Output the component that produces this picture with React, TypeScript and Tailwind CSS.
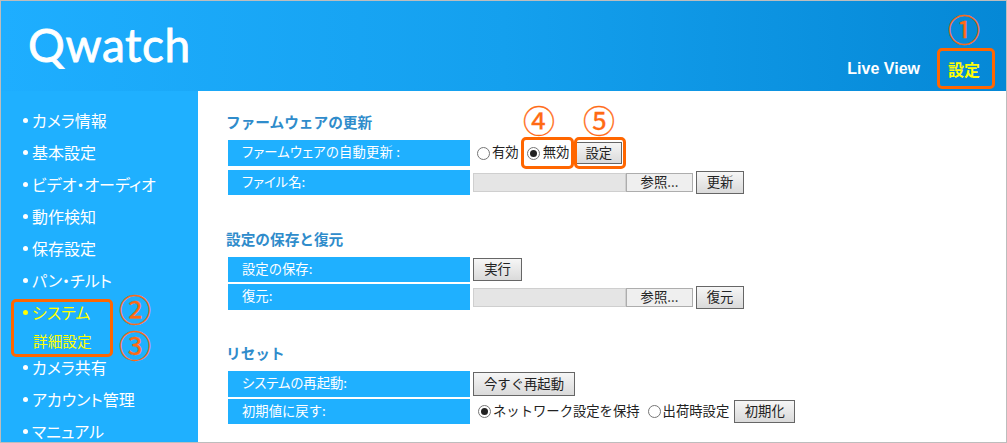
import React from "react";

const jp = "font-['MS_UI_Gothic','Noto_Sans_CJK_JP','Noto_Sans',sans-serif]";

function Radio({ on }: { on?: boolean }) {
  return (
    <span className="inline-flex h-[13px] w-[13px] items-center justify-center rounded-full border border-[#767676] bg-white">
      {on && <span className="h-[7px] w-[7px] rounded-full bg-[#222]" />}
    </span>
  );
}

function Btn({ children, w, h = "h-[23px]" }: { children: React.ReactNode; w: string; h?: string }) {
  return (
    <span className={`inline-flex ${w} ${h} items-center justify-center border border-[#666666] bg-gradient-to-b from-[#f6f6f6] to-[#dadada] pb-[1px] text-[13.33px] text-[#222]`}>
      {children}
    </span>
  );
}

function Row({ label, h, track = "", children }: { label: string; h: string; track?: string; children?: React.ReactNode }) {
  return (
    <div className={`flex ${h} items-center`}>
      <div className={`flex h-full w-[242px] items-center bg-[#1fb0ff] pb-[2px] pl-[14px] text-[13.33px] text-white ${track}`}>{label}</div>
      <div className="ml-[3px] flex items-center text-[13.33px] text-[#222]">{children}</div>
    </div>
  );
}

function FileField({ action }: { action: string }) {
  return (
    <div className="flex items-center">
      <div className="h-[19px] w-[153px] border border-[#cfcfcf] bg-[#e5e5e5]" />
      <span className="flex h-[19px] w-[67px] items-center justify-center border border-[#adadad] bg-[#efefef] pb-[1px] text-[13.33px]">参照...</span>
      <span className="ml-[3px]"><Btn w="w-[48px]">{action}</Btn></span>
    </div>
  );
}

function Nav({ text, active }: { text: string; active?: boolean }) {
  return (
    <li className={`flex h-[32px] items-center pl-[22px] text-[16px] [font-feature-settings:'palt'] ${active ? "text-[#ffff00]" : "text-white"}`}>
      <span className={`mr-[4px] h-[5px] w-[5px] rounded-full ${active ? "bg-[#ffff00]" : "bg-white"}`} />
      {text}
    </li>
  );
}

function Mark({ n, x, y }: { n: string; x: string; y: string }) {
  return (
    <span className={`absolute ${x} ${y} flex h-[30px] w-[34px] items-center justify-center text-[32px] font-normal leading-none text-[#ff6a13] [-webkit-text-stroke:0.3px_#ff6a13]`}>{n}</span>
  );
}

function Box({ cls }: { cls: string }) {
  return <span className={`absolute ${cls} rounded-[5px] border-[3px] border-[#ff6600]`} />;
}

function Heading({ children }: { children: React.ReactNode }) {
  return <h2 className="-ml-[2px] mb-[8px] h-[19px] text-[14.67px] font-bold leading-[17px] text-[#2f8ccb]">{children}</h2>;
}

export default function App() {
  return (
    <div className={`relative h-[443px] w-[1007px] overflow-hidden border border-[#bdbdbd] bg-white ${jp}`}>
      <header className="flex h-[90px] items-end justify-between bg-gradient-to-r from-[#1eaeff] via-[#14a0ee] to-[#0588d6]">
        <div className="mb-[18px] ml-[27px] font-['Lato',sans-serif] text-[46px] font-normal leading-[56px] tracking-[0.6px] text-white [-webkit-text-stroke:0.8px_white]">Qwatch</div>
        <nav className="mb-[10px] mr-[26px] flex items-center">
          <span className="font-['Liberation_Sans',sans-serif] text-[16px] font-bold text-white">Live View</span>
          <span className="ml-[28px] text-[16px] font-bold text-[#ffff00]">設定</span>
        </nav>
      </header>
      <div className="flex h-[351px]">
        <aside className="w-[197px] shrink-0 bg-[#1fb0ff]">
          <ul className="pt-[13px]">
            <Nav text="カメラ情報" />
            <Nav text="基本設定" />
            <Nav text="ビデオ・オーディオ" />
            <Nav text="動作検知" />
            <Nav text="保存設定" />
            <Nav text="パン・チルト" />
            <Nav text="システム" active />
            <li className="flex h-[23px] items-center pl-[32px] pt-[2px] text-[14.67px] text-[#ffff00]">詳細設定</li>
            <Nav text="カメラ共有" />
            <Nav text="アカウント管理" />
            <Nav text="マニュアル" />
          </ul>
        </aside>
        <main className="flex-1 pl-[30px] pt-[22px]">
          <section className="h-[117px]">
            <Heading>ファームウェアの更新</Heading>
            <div className="flex flex-col gap-[4px]">
              <Row label="ファームウェアの自動更新 :" h="h-[26px]" track="tracking-[0.2px] [font-feature-settings:'palt']">
                <span className="ml-[4px] flex"><Radio /></span><span className="ml-[2px] pb-[2px]">有効</span>
                <span className="ml-[8px] flex"><Radio on /></span><span className="ml-[3px] pb-[2px]">無効</span>
                <span className="ml-[6px] flex"><Btn w="w-[47px]" h="h-[22px]">設定</Btn></span>
              </Row>
              <Row label="ファイル名:" h="h-[25px]" track="[font-feature-settings:'palt']"><FileField action="更新" /></Row>
            </div>
          </section>
          <section className="h-[114px]">
            <Heading>設定の保存と復元</Heading>
            <div className="flex flex-col gap-[2px]">
              <Row label="設定の保存:" h="h-[25px]"><Btn w="w-[49px]">実行</Btn></Row>
              <Row label="復元:" h="h-[26px]"><FileField action="復元" /></Row>
            </div>
          </section>
          <section>
            <Heading>リセット</Heading>
            <div className="flex flex-col gap-[2px]">
              <Row label="システムの再起動:" h="h-[26px]" track="[font-feature-settings:'palt']"><Btn w="w-[102px]" h="h-[24px]">今すぐ再起動</Btn></Row>
              <Row label="初期値に戻す:" h="h-[25px]">
                <span className="ml-[5px] flex"><Radio on /></span><span className="ml-[2px] pb-[2px]">ネットワーク設定を保持</span>
                <span className="ml-[8px] flex"><Radio /></span><span className="ml-[2px] pb-[2px]">出荷時設定</span>
                <span className="ml-[5px] flex"><Btn w="w-[61px]">初期化</Btn></span>
              </Row>
            </div>
          </section>
        </main>
      </div>
      <Box cls="left-[936px] top-[47px] h-[41px] w-[58px]" />
      <Box cls="left-[10px] top-[298px] h-[58px] w-[102px]" />
      <Box cls="left-[520px] top-[136px] h-[32px] w-[53px]" />
      <Box cls="left-[573px] top-[136px] h-[32px] w-[52px]" />
      <Mark n="①" x="left-[946px]" y="top-[12px]" />
      <Mark n="②" x="left-[117px]" y="top-[292px]" />
      <Mark n="③" x="left-[117px]" y="top-[328px]" />
      <Mark n="④" x="left-[521px]" y="top-[103px]" />
      <Mark n="⑤" x="left-[581px]" y="top-[103px]" />
    </div>
  );
}
